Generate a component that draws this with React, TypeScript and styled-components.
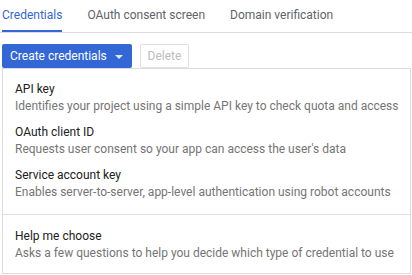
import React from 'react';
import styled, { createGlobalStyle } from 'styled-components';

const GlobalStyle = createGlobalStyle`
  html, body {
    margin: 0;
    padding: 0;
    background: #ffffff;
  }
  body {
    font-family: Roboto, "Liberation Sans", Arial, sans-serif;
    font-size: 12px;
    color: #212121;
  }
`;

const Page = styled.div`
  width: 412px;
  height: 275px;
  overflow: hidden;
  box-sizing: border-box;
  padding-left: 2px;
`;

const TabBar = styled.div`
  display: flex;
  gap: 25px;
  height: 32px;
  border-bottom: 1px solid #dadce0;
  margin-left: -2px;
  padding-left: 2px;
`;

const Tab = styled.div<{ active?: boolean }>`
  display: flex;
  align-items: center;
  height: 30px;
  border-bottom: 2px solid ${p => (p.active ? '#3367d6' : 'transparent')};
  color: ${p => (p.active ? '#3367d6' : '#5f6368')};
  font-size: 12px;
  white-space: nowrap;
`;

const Toolbar = styled.div`
  display: flex;
  gap: 8px;
  margin-top: 11px;
`;

const PrimaryButton = styled.button`
  display: flex;
  align-items: center;
  justify-content: space-between;
  height: 24px;
  width: 130px;
  padding: 0 9px 0 8px;
  border: none;
  border-radius: 2px;
  background: #3367d6;
  color: #ffffff;
  font-family: inherit;
  font-size: 12px;
  cursor: pointer;
  white-space: nowrap;
`;

const Caret = styled.span`
  width: 0;
  height: 0;
  border-left: 4px solid transparent;
  border-right: 4px solid transparent;
  border-top: 4px solid #ffffff;
  margin-top: 1px;
  opacity: 0.85;
`;

const DisabledButton = styled.button`
  height: 24px;
  width: 49px;
  padding: 0;
  border: 1px solid #e0e0e0;
  border-radius: 2px;
  background: #ffffff;
  color: #bdbdbd;
  font-family: inherit;
  font-size: 12px;
`;

const Menu = styled.div`
  width: 409px;
  box-sizing: border-box;
  border: 1px solid #dadce0;
  background: #ffffff;
`;

const Section = styled.div<{ top: number; bottom: number; divider?: boolean }>`
  padding: ${p => p.top}px 0 ${p => p.bottom}px;
  border-top: ${p => (p.divider ? '1px solid #e0e0e0' : 'none')};
`;

const Item = styled.div`
  padding: 5px 12px 4px;
  cursor: pointer;
`;

const ItemTitle = styled.div`
  line-height: 17px;
  color: #212121;
`;

const ItemDesc = styled.div`
  line-height: 17px;
  color: #757575;
  white-space: nowrap;
`;

const options = [
  { title: 'API key', desc: 'Identifies your project using a simple API key to check quota and access' },
  { title: 'OAuth client ID', desc: "Requests user consent so your app can access the user's data" },
  { title: 'Service account key', desc: 'Enables server-to-server, app-level authentication using robot accounts' },
];

export default function App() {
  return (
    <>
      <GlobalStyle />
      <Page>
        <TabBar>
          <Tab active>Credentials</Tab>
          <Tab>OAuth consent screen</Tab>
          <Tab>Domain verification</Tab>
        </TabBar>
        <Toolbar>
          <PrimaryButton>
            Create credentials
            <Caret />
          </PrimaryButton>
          <DisabledButton disabled>Delete</DisabledButton>
        </Toolbar>
        <Menu>
          <Section top={7} bottom={9}>
            {options.map(o => (
              <Item key={o.title}>
                <ItemTitle>{o.title}</ItemTitle>
                <ItemDesc>{o.desc}</ItemDesc>
              </Item>
            ))}
          </Section>
          <Section top={8} bottom={7} divider>
            <Item>
              <ItemTitle>Help me choose</ItemTitle>
              <ItemDesc>Asks a few questions to help you decide which type of credential to use</ItemDesc>
            </Item>
          </Section>
        </Menu>
      </Page>
    </>
  );
}
